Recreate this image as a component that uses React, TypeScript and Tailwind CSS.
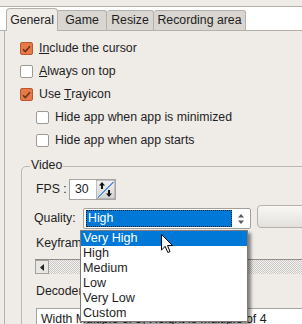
import React from "react";

const Check = ({ checked }: { checked?: boolean }) =>
  checked ? (
    <div className="w-[13px] h-[13px] shrink-0 rounded-[2px] border border-[#b9582c] bg-[#e77a4a] flex items-center justify-center">
      <svg width="9" height="8" viewBox="0 0 9 8">
        <path d="M1 4.2 L3.3 6.5 L8 1.2" fill="none" stroke="#6b3318" strokeWidth="1.6" />
      </svg>
    </div>
  ) : (
    <div className="w-[13px] h-[13px] shrink-0 rounded-[2px] border border-[#9d9a96] bg-white" />
  );

const Row = ({ checked, children }: { checked?: boolean; children: React.ReactNode }) => (
  <div className="h-[23px] flex items-center gap-[6px]">
    <Check checked={checked} />
    <span>{children}</span>
  </div>
);

export default function App() {
  return (
    <div className="relative w-[302px] h-[324px] overflow-hidden bg-[#efebe7] text-[12.3px] leading-none text-[#1e1e1e] font-['Liberation_Sans',Arial,sans-serif]">
      <div className="h-[6px]" />
      {/* tab bar */}
      <div className="h-[25px] border-y border-[#b4b0ab] bg-white flex items-end pl-[6px]">
        <div className="relative -mb-px h-[23px] w-[52px] bg-[#efebe7] border border-b-0 border-[#b4b0ab] rounded-t-[4px] flex items-center justify-center">
          General
        </div>
        <div className="h-[20px] w-[49px] bg-[#d9d5d0] border-t border-r border-[#b4b0ab] rounded-tr-[3px] flex items-center justify-center">
          Game
        </div>
        <div className="h-[20px] w-[47px] bg-[#d9d5d0] border-t border-r border-[#b4b0ab] rounded-t-[3px] flex items-center justify-center">
          Resize
        </div>
        <div className="h-[20px] w-[92px] bg-[#d9d5d0] border-t border-r border-[#b4b0ab] rounded-t-[3px] flex items-center justify-center">
          Recording area
        </div>
      </div>
      {/* panel */}
      <div className="ml-[4px] h-[300px] border-l border-[#b4b0ab]">
        <div className="pl-[15px] pt-[6px]">
          <Row checked>
            <span className="underline">In</span>clude the cursor
          </Row>
          <Row>
            <span className="underline">A</span>lways on top
          </Row>
          <Row checked>
            Use <span className="underline">T</span>rayicon
          </Row>
          <div className="pl-[16px]">
            <Row>Hide app when app is minimized</Row>
            <Row>Hide app when app starts</Row>
          </div>
          <fieldset className="mt-[5px] ml-[1px] w-[320px] border border-[#bcb8b3] rounded-tl-[5px] pl-[14px] pt-[4px]">
            <legend className="-ml-[6px] px-[1px] pb-[6px] leading-[12px]">
              <span className="relative top-[2px]">Video</span>
            </legend>
            <div className="flex flex-col">
              <div className="h-[21px] flex items-center">
                <span className="w-[33px]">FPS :</span>
                <div className="flex h-[21px] w-[47px] border border-[#a8a5a1] bg-white">
                  <div className="w-[26px] pl-[5px] flex items-center">30</div>
                  <div className="w-[19px] h-full">
                    <svg width="19" height="19" viewBox="0 0 19 19">
                      <defs>
                        <linearGradient id="sg" x1="0" y1="0" x2="0" y2="1">
                          <stop offset="0" stopColor="#f2f2f2" />
                          <stop offset="1" stopColor="#d2d2d2" />
                        </linearGradient>
                      </defs>
                      <rect x="0" y="0" width="19" height="19" rx="2" fill="url(#sg)" stroke="#9a9a9a" strokeWidth="1" />
                      <path d="M2 17.5 L17.5 2" stroke="#ffffff" strokeWidth="2.4" />
                      <path d="M2 17.5 L17.5 2" stroke="#3d7fcc" strokeWidth="1.2" />
                      <path d="M6 2 L3 5.5 L5 5.5 L5 9 L7 9 L7 5.5 L9 5.5 Z" fill="#111" />
                      <path d="M13 17 L10 13.5 L12 13.5 L12 10 L14 10 L14 13.5 L16 13.5 Z" fill="#111" />
                    </svg>
                  </div>
                </div>
              </div>
              <div className="mt-[5px] h-[24px] flex">
                <span className="self-end h-[21px] -ml-[2px] w-[49px] flex items-center">Quality:</span>
                <div className="self-end h-[21px] w-[168px] border border-[#a3a09c] rounded-[2px] bg-white flex pl-[2px] py-[1px]">
                  <div className="w-[146px] h-full bg-[#0078d7] border border-dotted border-[#1a1a1a] pl-[1px] flex items-center text-white">
                    High
                  </div>
                  <div className="flex-1 flex items-center justify-center">
                    <svg width="8" height="12" viewBox="0 0 8 12">
                      <path d="M4 1 L7 4.5 L1 4.5 Z" fill="#5a5a5a" />
                      <path d="M4 11 L7 7.5 L1 7.5 Z" fill="#5a5a5a" />
                    </svg>
                  </div>
                </div>
                <div className="self-start ml-[6px] h-[23px] w-[60px] rounded-[4px] border border-[#b5b1ac] bg-gradient-to-b from-[#f8f7f5] to-[#e4e1dd]" />
              </div>
              <div className="mt-[4px] h-[21px] flex items-center">Keyframe interval :</div>
              <div className="mt-[5px] -ml-[1px] h-[15px] flex border-t border-[#8f8c88]">
                <div className="w-[14px] h-full bg-[#e8e6e3] border border-[#a3a09c] flex items-center justify-center">
                  <svg width="5" height="7" viewBox="0 0 5 7">
                    <path d="M4 0 L0 3.5 L4 7 Z" fill="#222" />
                  </svg>
                </div>
                <div className="flex-1 h-full bg-[repeating-conic-gradient(#c9c7c4_0_25%,#f4f3f1_0_50%)] bg-[length:2px_2px]" />
              </div>
              <div className="mt-[8px] h-[19px] flex items-center">Decoder :</div>
              <div className="mt-[7px] h-[22px] w-[300px] border border-[#a8a5a1] bg-white pl-[4px] flex items-center">
                Width Multiple of 8, Height is Multiple of 4
              </div>
            </div>
          </fieldset>
        </div>
      </div>

      {/* dropdown popup */}
      <div className="absolute left-[80px] top-[230px] w-[168px] h-[92px] bg-white border border-[#7d7a77] text-[12.6px] shadow-[3px_3px_3px_rgba(0,0,0,0.45)]">
        {["Very High", "High", "Medium", "Low", "Very Low", "Custom"].map((t, i) => (
          <div
            key={t}
            className={
              i === 0
                ? "h-[15px] pl-[2px] flex items-center bg-[#0078d7] text-white"
                : "h-[15px] pl-[2px] flex items-center"
            }
          >
            {t}
          </div>
        ))}
      </div>

      {/* mouse cursor */}
      <svg className="absolute left-[161px] top-[234px]" width="13" height="20" viewBox="0 0 13 20">
        <path d="M0.5 0.5 L0.5 16 L4.2 12.4 L6.8 18.5 L9 17.6 L6.5 11.6 L11.5 11.6 Z" fill="#fff" stroke="#000" strokeWidth="1" strokeLinejoin="round" />
      </svg>
    </div>
  );
}
